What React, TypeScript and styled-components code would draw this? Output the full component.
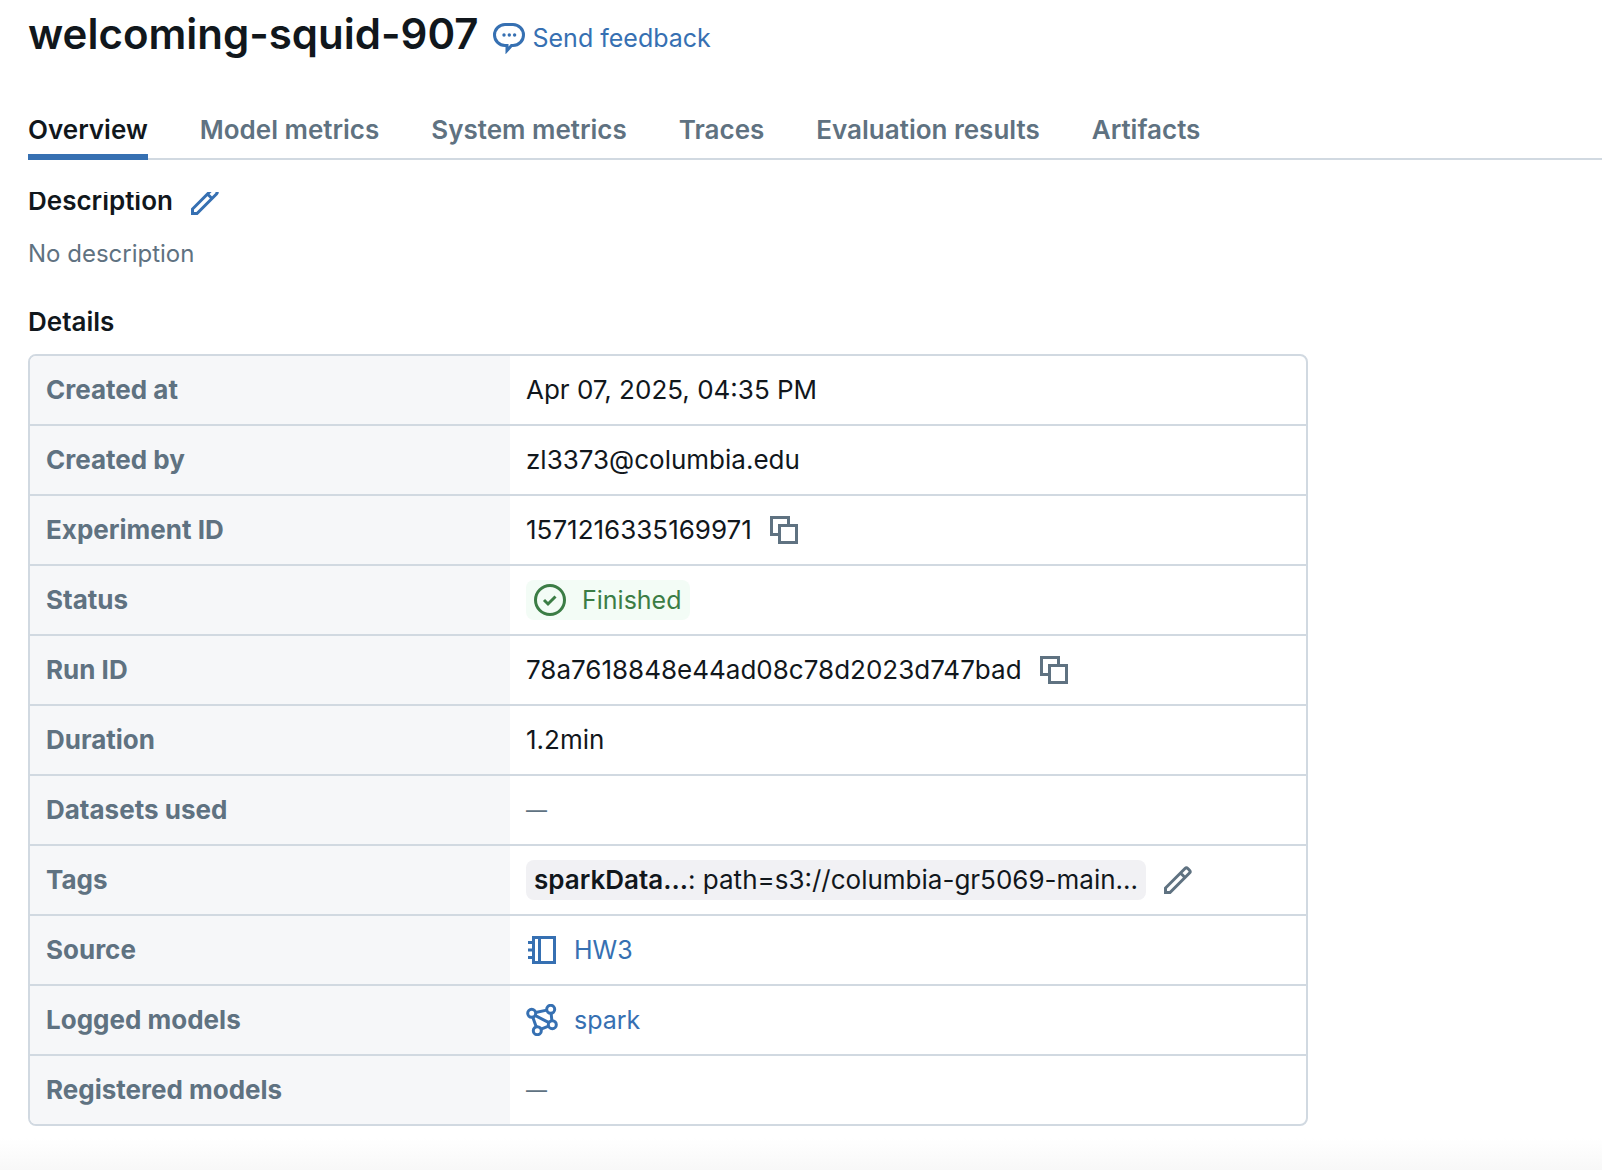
import React from 'react';
import styled, { createGlobalStyle } from 'styled-components';

const color = {
  text: '#11171c',
  muted: '#5f7281',
  link: '#3670b2',
  border: '#d1d9e1',
  labelBg: '#f6f7f9',
  success: '#3b7d45',
  successBg: '#f3fcf6',
  tagBg: '#f1f1f4',
};

const GlobalStyle = createGlobalStyle`
  * { box-sizing: border-box; }
  body {
    margin: 0;
    background: #fff;
    color: ${color.text};
    font: 400 26px/40px Inter, "Liberation Sans", sans-serif;
  }
  h1, h2, p { margin: 0; }
  a { color: inherit; text-decoration: none; }
`;

const Page = styled.div`
  display: flex;
  flex-direction: column;
  min-height: 100vh;
`;

const Header = styled.header`
  display: flex;
  align-items: center;
  gap: 14px;
  padding: 6px 28px 0;
`;

const Title = styled.h1`
  font-size: 42px;
  line-height: 56px;
  font-weight: 600;
`;

const IconLink = styled.a<{ $gap: number }>`
  display: inline-flex;
  align-items: center;
  gap: ${(p) => p.$gap}px;
  font-size: 25px;
  color: ${color.link};
`;

const FeedbackLink = styled(IconLink)`
  padding-top: 8px;
`;

const Tabs = styled.nav`
  display: flex;
  gap: 52px;
  margin: 48px 0 0 28px;
  border-bottom: 2px solid ${color.border};
`;

const Tab = styled.a<{ $active?: boolean }>`
  height: 50px;
  margin-bottom: -2px;
  font-weight: 600;
  color: ${(p) => (p.$active ? color.text : color.muted)};
  border-bottom: 6px solid ${(p) => (p.$active ? color.link : 'transparent')};
`;

const ScrollArea = styled.main`
  margin-top: 32px;
  padding: 0 28px;
  overflow: hidden;
`;

const Scrolled = styled.div`
  margin-top: -11px;
`;

const SectionTitle = styled.h2`
  font-size: 26px;
  line-height: 40px;
  font-weight: 600;
`;

const HeadingRow = styled.div`
  display: flex;
  align-items: center;
  gap: 16px;
`;

const Empty = styled.p`
  margin: 13px 0 28px;
  font-size: 24px;
  color: ${color.muted};
`;

const IconButton = styled.button<{ $tone: string }>`
  display: inline-flex;
  padding: 0;
  border: 0;
  background: none;
  color: ${(p) => p.$tone};
  cursor: pointer;
`;

const TableFrame = styled.div`
  max-width: 1280px;
  margin-top: 12px;
  border: 2px solid ${color.border};
  border-radius: 8px;
  overflow: hidden;
`;

const Table = styled.table`
  width: 100%;
  table-layout: fixed;
  border-collapse: separate;
  border-spacing: 0;

  tr:not(:last-child) > * { border-bottom: 2px solid ${color.border}; }
  tr:last-child > * { height: 68px; }
`;

const Label = styled.th`
  width: 480px;
  height: 70px;
  padding: 0 16px;
  text-align: left;
  font-weight: 700;
  color: ${color.muted};
  background: ${color.labelBg};
`;

const Value = styled.td`
  padding: 0 16px;
`;

const Line = styled.div`
  display: flex;
  align-items: center;
  gap: 16px;
`;

const Chip = styled.span<{ $tone: string; $bg: string }>`
  display: inline-flex;
  align-items: center;
  height: 40px;
  padding: 0 8px;
  border-radius: 8px;
  color: ${(p) => p.$tone};
  background: ${(p) => p.$bg};
  white-space: pre;
`;

const StatusText = styled.span`
  margin-left: 16px;
  font-size: 25px;
`;

const TagKey = styled.strong`
  font-weight: 600;
`;

const Dash = styled.span`
  font-size: 21px;
  color: ${color.muted};
`;

const BottomShade = styled.div`
  flex: 1;
  min-height: 32px;
  margin-top: 12px;
  background: linear-gradient(#fff, #f8f8f8);
`;

const Svg = styled.svg`
  display: block;
  flex: none;
  width: 32px;
  height: 32px;
  fill: none;
  stroke: currentColor;
  stroke-width: 3;
`;

const SpeechIcon = () => (
  <Svg viewBox="0 0 32 32" aria-hidden="true">
    <path d="M12 2.5h8a10.5 10.5 0 0 1 0 21h-1.5L14 28.5v-5h-2a10.5 10.5 0 0 1 0-21z" />
    <g fill="currentColor" stroke="none">
      <circle cx="11" cy="13" r="1.7" />
      <circle cx="16.3" cy="13" r="1.7" />
      <circle cx="21.6" cy="13" r="1.7" />
    </g>
  </Svg>
);

const PencilIcon = () => (
  <Svg viewBox="0 0 32 32" aria-hidden="true">
    <path d="M3.5 28.5V24L23 4.5a2 2 0 0 1 2.8 0l1.7 1.7a2 2 0 0 1 0 2.8L8 28.5zM18.5 9l4.5 4.5" />
  </Svg>
);

const CopyIcon = () => (
  <Svg viewBox="0 0 32 32" aria-hidden="true">
    <path d="M11 20.5H3.5v-17h17V11" />
    <path d="M11.5 11.5h17v17h-17z" />
  </Svg>
);

const CheckIcon = () => (
  <Svg viewBox="0 0 32 32" aria-hidden="true">
    <circle cx="16" cy="16" r="14.5" />
    <path d="M10 16l4 4 7.5-7.5" />
  </Svg>
);

const NotebookIcon = () => (
  <Svg viewBox="0 0 32 32" aria-hidden="true">
    <path d="M7.5 3.5h21v25h-21zM13.5 3v26M2 8.5h6M2 16h6M2 23.5h6" />
  </Svg>
);

const ModelIcon = () => (
  <Svg viewBox="0 0 32 32" aria-hidden="true">
    <circle cx="5.7" cy="9.3" r="4" />
    <circle cx="24.7" cy="5.3" r="4" />
    <circle cx="26.3" cy="20.7" r="4" />
    <circle cx="11.3" cy="26.7" r="4" />
    <path d="M9.6 8.5l11.2-2.4M9 11.4l13.9 7.2M6.8 13.2l3.4 9.6M25.1 9.3l.8 7.4M15 25.2l7.6-3" />
  </Svg>
);

const tabs = ['Overview', 'Model metrics', 'System metrics', 'Traces', 'Evaluation results', 'Artifacts'];

const Copyable = ({ text, label }: { text: string; label: string }) => (
  <Line>
    {text}
    <IconButton type="button" $tone={color.muted} aria-label={label}>
      <CopyIcon />
    </IconButton>
  </Line>
);

const rows: [string, React.ReactNode][] = [
  ['Created at', 'Apr 07, 2025, 04:35 PM'],
  ['Created by', 'zl3373@columbia.edu'],
  ['Experiment ID', <Copyable text="1571216335169971" label="Copy experiment ID" />],
  [
    'Status',
    <Line>
      <Chip $tone={color.success} $bg={color.successBg}>
        <CheckIcon />
        <StatusText>Finished</StatusText>
      </Chip>
    </Line>,
  ],
  ['Run ID', <Copyable text="78a7618848e44ad08c78d2023d747bad" label="Copy run ID" />],
  ['Duration', '1.2min'],
  ['Datasets used', <Dash>—</Dash>],
  [
    'Tags',
    <Line>
      <Chip $tone={color.text} $bg={color.tagBg}>
        <TagKey>sparkData...</TagKey>
        <span>: path=s3://columbia-gr5069-main...</span>
      </Chip>
      <IconButton type="button" $tone={color.muted} aria-label="Edit tags">
        <PencilIcon />
      </IconButton>
    </Line>,
  ],
  ['Source', <Line><IconLink href="#source" $gap={16}><NotebookIcon />HW3</IconLink></Line>],
  ['Logged models', <Line><IconLink href="#model" $gap={16}><ModelIcon />spark</IconLink></Line>],
  ['Registered models', <Dash>—</Dash>],
];

export default function App() {
  return (
    <Page>
      <GlobalStyle />
      <Header>
        <Title>welcoming-squid-907</Title>
        <FeedbackLink href="#feedback" $gap={8}>
          <SpeechIcon />
          Send feedback
        </FeedbackLink>
      </Header>
      <Tabs>
        {tabs.map((name, i) => (
          <Tab key={name} href="#tab" $active={i === 0}>
            {name}
          </Tab>
        ))}
      </Tabs>
      <ScrollArea>
        <Scrolled>
          <HeadingRow>
            <SectionTitle>Description</SectionTitle>
            <IconButton type="button" $tone={color.link} aria-label="Edit description">
              <PencilIcon />
            </IconButton>
          </HeadingRow>
          <Empty>No description</Empty>
          <SectionTitle>Details</SectionTitle>
          <TableFrame>
            <Table>
              <tbody>
                {rows.map(([label, value]) => (
                  <tr key={label}>
                    <Label scope="row">{label}</Label>
                    <Value>{value}</Value>
                  </tr>
                ))}
              </tbody>
            </Table>
          </TableFrame>
        </Scrolled>
      </ScrollArea>
      <BottomShade />
    </Page>
  );
}
